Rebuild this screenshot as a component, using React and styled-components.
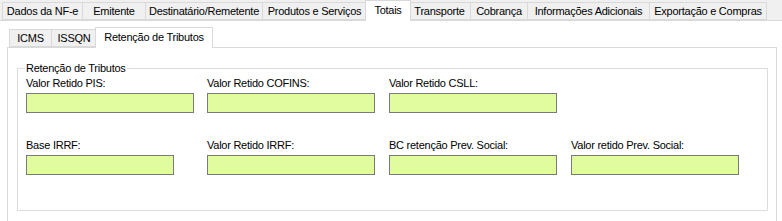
import styled, { createGlobalStyle } from "styled-components";

const GlobalStyle = createGlobalStyle`
  html, body {
    margin: 0;
    padding: 0;
    background: #f0f0f0;
    font-family: "Liberation Sans", Arial, sans-serif;
    font-size: 11px;
    letter-spacing: -0.25px;
    color: #000;
  }
`;

const Window = styled.div`
  width: 782px;
  height: 221px;
  overflow: hidden;
  display: flex;
  flex-direction: column;
`;

const TabStrip = styled.div`
  display: flex;
  align-items: flex-end;
  height: ${(p) => p.$h}px;
  padding-left: ${(p) => p.$pad}px;
  position: relative;
  z-index: 1;
`;

const Tab = styled.div`
  box-sizing: border-box;
  width: ${(p) => p.$w}px;
  height: ${(p) => (p.$active ? p.$h + 3 : p.$h)}px;
  margin: 0 ${(p) => (p.$active ? -2 : 0)}px ${(p) => (p.$active ? -1 : 0)}px;
  background: ${(p) => (p.$active ? "#fff" : "#f0f0f0")};
  border: 1px solid #d9d9d9;
  border-left-width: ${(p) => (p.$first || p.$active ? 1 : 0)}px;
  border-bottom: ${(p) => (p.$active ? "none" : "1px solid #d9d9d9")};
  display: flex;
  align-items: center;
  justify-content: center;
  padding-bottom: ${(p) => (p.$active ? 2 : 0)}px;
  white-space: nowrap;
  position: relative;
  z-index: ${(p) => (p.$active ? 2 : 1)};
`;

const TabPage = styled.div`
  flex: 1;
  background: #fff;
  border-top: 1px solid #d9d9d9;
  padding: 5px 5px 0 7px;
  display: flex;
  flex-direction: column;
`;

const InnerPanel = styled.div`
  flex: 1;
  background: #fff;
  border: 1px solid #d9d9d9;
  border-bottom: none;
  padding: 0 8px 0 9px;
`;

const GroupBox = styled.fieldset`
  box-sizing: border-box;
  margin: 13px 0 0;
  width: 751px;
  height: 150px;
  border: 1px solid #dcdcdc;
  padding: 0 0 0 8px;
  min-width: 0;
`;

const Legend = styled.legend`
  padding: 0 1px;
  margin-left: -1px;
  line-height: 14px;
`;

const FieldGrid = styled.div`
  display: grid;
  grid-template-columns: 181px 182px 182px 182px;
  row-gap: 25px;
  padding-top: 1px;
`;

const Field = styled.label`
  display: flex;
  flex-direction: column;
  gap: 3px;
  grid-column: ${(p) => p.$col};
`;

const FieldLabel = styled.span`
  line-height: 14px;
  white-space: nowrap;
`;

const Input = styled.input`
  box-sizing: border-box;
  width: ${(p) => p.$w || 168}px;
  height: 20px;
  margin: 0;
  border: 1px solid #7a7a7a;
  background: #e1fb9f;
  font: inherit;
  padding: 0 3px;
  outline: none;
`;

const outerTabs = [
  ["Dados da NF-e", 81],
  ["Emitente", 63],
  ["Destinatário/Remetente", 117],
  ["Produtos e Serviços", 104],
  ["Totais", 46],
  ["Transporte", 62],
  ["Cobrança", 57],
  ["Informações Adicionais", 122],
  ["Exportação e Compras", 117],
];

const innerTabs = [
  ["ICMS", 43],
  ["ISSQN", 45],
  ["Retenção de Tributos", 118],
];

const fields = [
  { label: "Valor Retido PIS:", col: 1 },
  { label: "Valor Retido COFINS:", col: 2 },
  { label: "Valor Retido CSLL:", col: 3 },
  { label: "Base IRRF:", col: 1, w: 148 },
  { label: "Valor Retido IRRF:", col: 2 },
  { label: "BC retenção Prev. Social:", col: 3 },
  { label: "Valor retido Prev. Social:", col: 4 },
];

export default function App() {
  return (
    <Window>
      <GlobalStyle />
      <TabStrip $h={20} $pad={2}>
        {outerTabs.map(([name, w], i) => (
          <Tab key={name} $w={w} $h={18} $first={i === 0} $active={name === "Totais"}>
            {name}
          </Tab>
        ))}
      </TabStrip>
      <TabPage>
        <TabStrip $h={21} $pad={2}>
          {innerTabs.map(([name, w], i) => (
            <Tab
              key={name}
              $w={w}
              $h={18}
              $first={i === 0}
              $active={name === "Retenção de Tributos"}
            >
              {name}
            </Tab>
          ))}
        </TabStrip>
        <InnerPanel>
          <GroupBox>
            <Legend>Retenção de Tributos</Legend>
            <FieldGrid>
              {fields.map((f) => (
                <Field key={f.label} $col={f.col}>
                  <FieldLabel>{f.label}</FieldLabel>
                  <Input $w={f.w} />
                </Field>
              ))}
            </FieldGrid>
          </GroupBox>
        </InnerPanel>
      </TabPage>
    </Window>
  );
}
